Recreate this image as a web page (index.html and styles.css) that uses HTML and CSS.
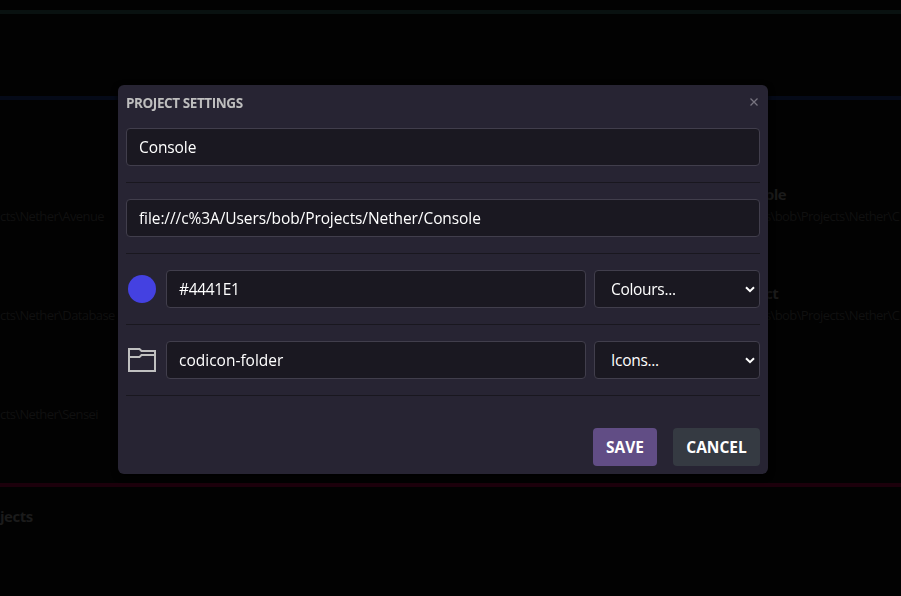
FILE: index.html
```html
<!DOCTYPE html>
<html lang="en">
<head>
<meta charset="utf-8">
<title>Project Settings</title>
<link rel="stylesheet" href="styles.css">
</head>
<body>
<main class="page">
  <section class="group teal"></section>
  <section class="group blue">
    <div class="card"><h3></h3><p>cts\Nether\Avenue</p></div>
    <div class="card"><h3>ole</h3><p>s\bob\Projects\Nether\C</p></div>
    <div class="card"><h3></h3><p>cts\Nether\Database</p></div>
    <div class="card"><h3>ct</h3><p>s\bob\Projects\Nether\C</p></div>
    <div class="card"><h3></h3><p>cts\Nether\Sensei</p></div>
  </section>
  <section class="group red"><h3>jects</h3></section>
</main>
<div class="overlay">
  <form class="dialog">
    <header class="head">
      <h2>PROJECT SETTINGS</h2>
      <svg class="close" width="10" height="10" viewBox="0 0 10 10"><path d="M1.5 1.5 8.5 8.5M8.5 1.5 1.5 8.5"/></svg>
    </header>
    <div class="row"><input class="field" type="text" value="Console"></div>
    <hr>
    <div class="row"><input class="field" type="text" value="file:///c%3A/Users/bob/Projects/Nether/Console"></div>
    <hr>
    <div class="row">
      <span class="glyph"><span class="swatch"></span></span>
      <input class="field hex" type="text" value="#4441E1">
      <div class="pick"><select class="field"><option>Colours...</option></select>
        <svg class="chevron" width="10" height="7" viewBox="0 0 10 7"><path d="M1 1.2 5 5.2 9 1.2"/></svg></div>
    </div>
    <hr>
    <div class="row">
      <span class="glyph"><svg class="folder" width="28" height="24" viewBox="0 0 28 24"><path d="M1 1H11.5L13.5 3H27V23H1ZM1 9H11.5L13.5 7H27"/></svg></span>
      <input class="field icon-name" type="text" value="codicon-folder">
      <div class="pick"><select class="field"><option>Icons...</option></select>
        <svg class="chevron" width="10" height="7" viewBox="0 0 10 7"><path d="M1 1.2 5 5.2 9 1.2"/></svg></div>
    </div>
    <hr>
    <footer class="actions">
      <button class="save" type="button">SAVE</button>
      <button class="cancel" type="button">CANCEL</button>
    </footer>
  </form>
</div>
</body>
</html>
```
FILE: styles.css
```css
* { box-sizing: border-box; margin: 0; }
body {
  background: #020202;
  overflow: hidden;
  font-family: "Segoe UI", "Open Sans", sans-serif;
}
.page { height: 596px; padding-top: 10px; overflow: hidden; }
.group { border-top: 4px solid; }
.teal { height: 86px; border-color: #091110; }
.blue {
  height: 387px;
  border-color: #050a18;
  padding-top: 83px;
  display: grid;
  grid-template-columns: 765px 1fr;
  grid-auto-rows: 99px;
}
.red { border-color: #1c000b; padding-top: 18px; }
h3 { height: 22px; font-size: 15px; line-height: 22px; color: #1b1b1b; letter-spacing: -0.5px; }
.card p { font-size: 13px; line-height: 22px; color: #101010; letter-spacing: -0.6px; white-space: nowrap; }
.overlay { position: fixed; inset: 0; padding: 85px 133px 0 118px; }
.dialog {
  height: 389px;
  padding: 8px;
  border-radius: 6px;
  background: #272433;
  box-shadow: 0 2px 6px #000;
}
.head { height: 35px; display: flex; justify-content: space-between; }
h2 { font-size: 13.5px; line-height: 20px; color: #bebebe; letter-spacing: -0.42px; }
.close { margin: 4px 1px; }
.close path { stroke: #77747f; stroke-width: 1.3; fill: none; }
.row { display: flex; gap: 8px; height: 38px; }
.field {
  flex: 1;
  min-width: 0;
  width: 100%;
  height: 38px;
  padding: 0 12px;
  border: 1px solid #413e4c;
  border-radius: 4px;
  background: #1a1821;
  color: #fff;
  font: 15.5px "Segoe UI", "Open Sans", sans-serif;
  letter-spacing: -0.09px;
  outline: none;
  appearance: none;
}
.hex { letter-spacing: -0.35px; }
.icon-name { letter-spacing: 0; }
hr { height: 1px; margin: 16px 0; border: 0; background: #19171f; }
.glyph { width: 32px; display: flex; align-items: center; justify-content: center; }
.swatch { width: 28px; height: 28px; border-radius: 50%; background: #4441e1; }
.folder path { fill: none; stroke: #c0c0c0; stroke-width: 2; }
.pick { position: relative; width: 166px; }
.pick .field { padding-left: 16px; letter-spacing: -0.3px; }
.chevron { position: absolute; right: 5px; top: 16px; }
.chevron path { fill: none; stroke: #fff; stroke-width: 2; }
.actions { display: flex; justify-content: flex-end; gap: 16px; padding-top: 16px; }
button {
  height: 38px;
  padding: 0;
  border: 0;
  border-radius: 4px;
  color: #fff;
  font: bold 15.5px "Segoe UI", "Open Sans", sans-serif;
}
.save { width: 64px; background: #614d85; }
.cancel { width: 87px; background: #353a42; }
```
